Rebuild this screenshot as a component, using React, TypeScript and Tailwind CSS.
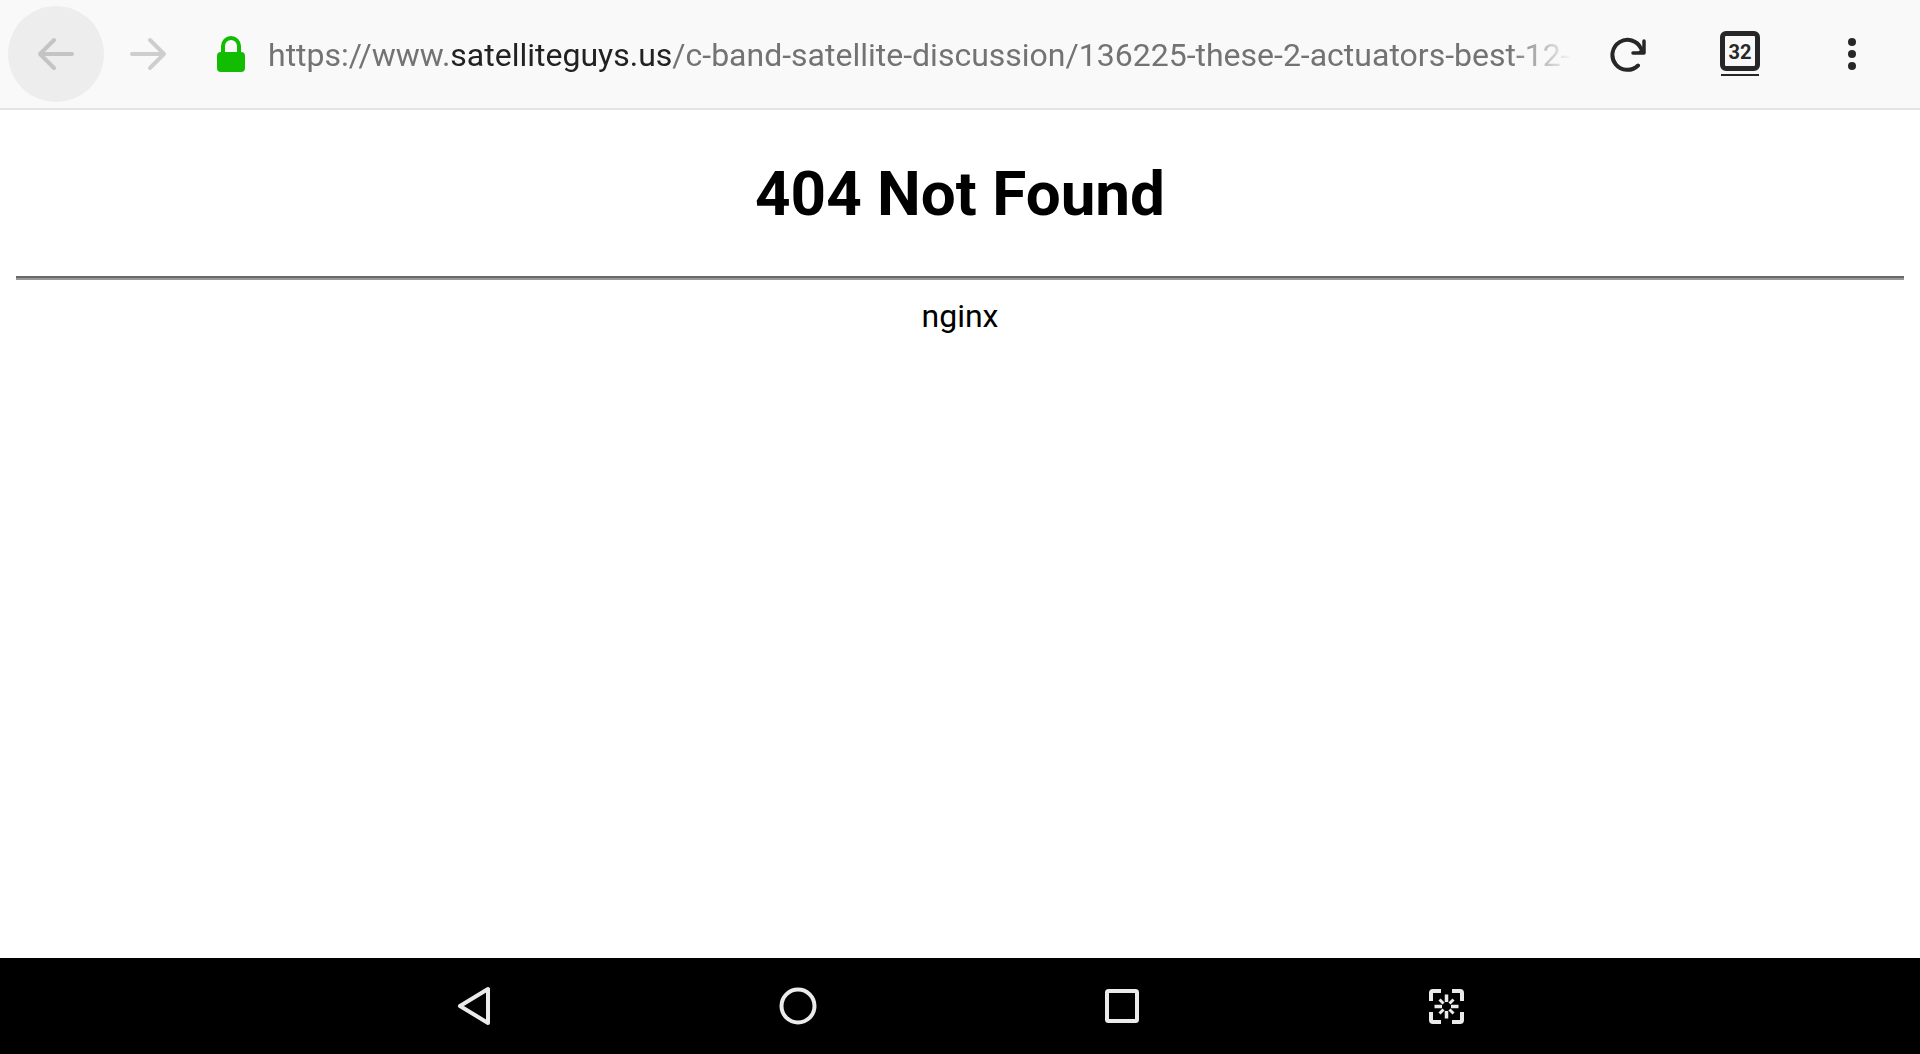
import type { ReactNode } from "react";

interface IconButtonProps {
  label: string;
  className: string;
  disabled?: boolean;
  children: ReactNode;
}

function IconButton({ label, className, disabled, children }: IconButtonProps) {
  return (
    <button
      type="button"
      aria-label={label}
      disabled={disabled}
      className={`flex shrink-0 items-center justify-center ${className}`}
    >
      {children}
    </button>
  );
}

function Toolbar() {
  return (
    <header className="flex h-[110px] items-center border-b-2 border-[#e4e4e4] bg-[#f9f9f9] pr-3 pl-2">
      <IconButton label="Back" disabled className="h-24 w-24 rounded-full bg-[#ededed] text-[#c4c4c4]">
        <svg viewBox="0 0 40 40" className="h-10 w-10" fill="none" stroke="currentColor" strokeWidth="4" strokeLinecap="round" strokeLinejoin="round">
          <path d="M36 20H4M18 6 4 20l14 14" />
        </svg>
      </IconButton>
      <IconButton label="Forward" disabled className="h-24 w-22 text-[#cecece]">
        <svg viewBox="0 0 40 40" className="h-10 w-10" fill="none" stroke="currentColor" strokeWidth="4" strokeLinecap="round" strokeLinejoin="round">
          <path d="M4 20h32M22 6l14 14-14 14" />
        </svg>
      </IconButton>
      <IconButton label="Site security" className="h-24 w-[76px] pl-0.5 text-[#12bc00]">
        <svg viewBox="0 0 28 36" className="h-9 w-7">
          <path d="M6 18V10a8 8 0 0 1 16 0V18" fill="none" stroke="currentColor" strokeWidth="4" />
          <rect y="16" width="28" height="20" rx="4" fill="currentColor" />
        </svg>
      </IconButton>
      <button
        type="button"
        className="min-w-0 flex-1 overflow-hidden pt-0.5 text-left text-[32px] leading-[38px] whitespace-nowrap text-[#737373] [mask-image:linear-gradient(to_left,transparent,black_64px)]"
      >
        https://www.<span className="text-[#222222]">satelliteguys.us</span>
        /c-band-satellite-discussion/136225-these-2-actuators-best-12-
      </button>
      <IconButton label="Reload" className="h-24 w-28 text-[#272727]">
        <svg viewBox="0 -1 36 36" className="h-9 w-9" fill="none" stroke="currentColor" strokeWidth="4" strokeLinecap="round" strokeLinejoin="round">
          <path d="M28 28.500A15 15 0 1 1 31 11.500" />
          <path d="M34 4v12H23" strokeWidth="3.500" />
          <path d="M34 9v7h-7z" fill="currentColor" stroke="none" />
        </svg>
      </IconButton>
      <IconButton label="Tabs" className="h-24 w-28 flex-col gap-[3px] pb-px text-[#272727]">
        <span className="flex h-10 w-10 items-center justify-center rounded-md border-5 border-[#272727] pt-0.5 text-xl leading-5 font-bold">
          32
        </span>
        <span className="h-0.5 w-[38px] bg-[#272727]" />
      </IconButton>
      <IconButton label="Menu" className="h-24 w-28 flex-col gap-1">
        <span className="h-2 w-2 rounded-full bg-[#272727]" />
        <span className="h-2 w-2 rounded-full bg-[#272727]" />
        <span className="h-2 w-2 rounded-full bg-[#272727]" />
      </IconButton>
    </header>
  );
}

function NavigationBar() {
  return (
    <nav className="bg-black">
      <div className="mx-auto grid h-24 max-w-[1296px] grid-cols-4 text-[#ebebeb]">
        <IconButton label="System back" className="h-full">
          <svg viewBox="0 0 40 40" className="h-10 w-10" fill="none" stroke="currentColor" strokeWidth="4" strokeLinejoin="round">
            <path d="M34 3v34L6 20z" />
          </svg>
        </IconButton>
        <IconButton label="Home" className="h-full">
          <svg viewBox="0 0 40 40" className="h-10 w-10" fill="none" stroke="currentColor" strokeWidth="4">
            <circle cx="20" cy="20" r="16.500" />
          </svg>
        </IconButton>
        <IconButton label="Recent apps" className="h-full">
          <svg viewBox="0 0 40 40" className="h-10 w-10" fill="none" stroke="currentColor" strokeWidth="4">
            <rect x="5" y="5" width="30" height="30" rx="1.500" />
          </svg>
        </IconButton>
        <IconButton label="Screenshot" className="h-full">
          <svg viewBox="0 0 40 40" className="h-10 w-10" fill="none" stroke="currentColor" strokeWidth="4">
            <path d="M5 15V7q0-2 2-2h8M26 5h8q2 0 2 2v8M36 26v8q0 2-2 2h-8M15 36H7q-2 0-2-2v-8" />
            <path d="M20.500 8.500V16M20.500 25v7.500M8.500 20.500H16M25 20.500h7.500" strokeWidth="3.500" />
            <path d="m13.500 13.500 4 4M27.500 13.500l-4 4M13.500 27.500l4-4M27.500 27.500l-4-4" strokeWidth="3" />
          </svg>
        </IconButton>
      </div>
    </nav>
  );
}

export default function App() {
  return (
    <div className="flex min-h-screen flex-col bg-white font-[Roboto,sans-serif]">
      <Toolbar />
      <main className="flex-1 px-4 pt-[46px] text-center text-black">
        <h1 className="text-[62px] leading-[75px] font-bold">404 Not Found</h1>
        <hr className="mt-[45px] mb-[17px] h-1 border-y-2 border-t-[#686868] border-b-[#989898]" />
        <p className="text-[32px] leading-[38px]">nginx</p>
      </main>
      <NavigationBar />
    </div>
  );
}
